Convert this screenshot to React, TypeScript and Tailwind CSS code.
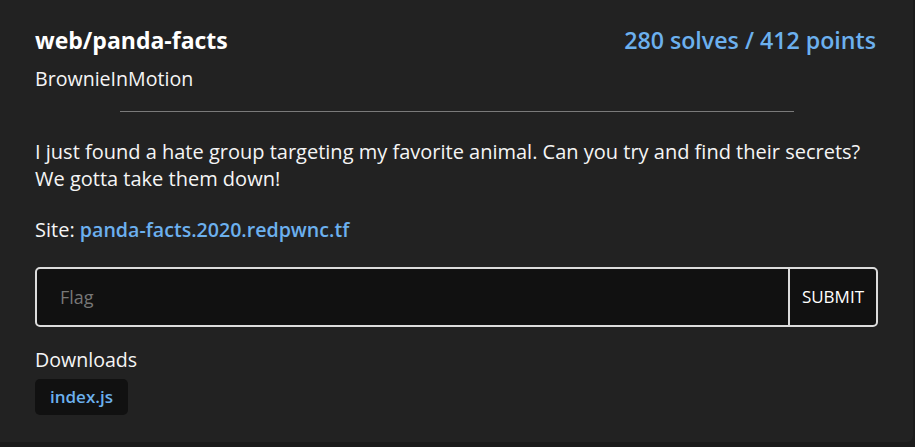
export default function App() {
  return (
    <div className="h-screen w-full bg-[#1b1b1b] font-['Open_Sans',sans-serif] text-[#f5f5f5]">
      <div className="h-[442px] w-[913px] rounded-br-md bg-[#222222] px-[35px] pt-[24px]">
        <div className="flex items-start justify-between">
          <div>
            <h1 className="text-[23px] font-bold leading-[32px] text-white">web/panda-facts</h1>
            <p className="mt-[10px] text-[19.6px] leading-[26px]">BrownieInMotion</p>
          </div>
          <p className="pr-[2px] text-[23.2px] font-semibold leading-[32px] text-[#6cb0ee]">280 solves / 412 points</p>
        </div>
        <hr className="mx-auto mt-[19px] w-[674px] border-t border-[#7a7a7a]" />
        <div className="mt-[26px] text-[20px] leading-[27px]">
          <p>
            I just found a hate group targeting my favorite animal. Can you try and find their secrets?
            <br />
            We gotta take them down!
          </p>
          <p className="mt-[24px]">
            Site: <span className="text-[19.6px] font-semibold text-[#6cb0ee]">panda-facts.2020.redpwnc.tf</span>
          </p>
        </div>
        <form className="mt-[24px] flex h-[60px] overflow-hidden rounded-[5px] border-2 border-[#dcdcdc] bg-[#111111]">
          <input
            className="flex-1 bg-transparent px-[23px] text-[18px] text-white placeholder-[#777] outline-none"
            placeholder="Flag"
          />
          <button type="button" className="border-l-2 border-[#dcdcdc] px-[12px] text-[17px] text-white">
            SUBMIT
          </button>
        </form>
        <p className="mt-[20px] text-[19.6px] leading-[26px]">Downloads</p>
        <div className="mt-[6px] flex">
          <span className="rounded-[5px] bg-[#111111] px-[15px] py-[4px] text-[17px] font-semibold leading-[28px] text-[#6cb0ee]">
            index.js
          </span>
        </div>
      </div>
    </div>
  );
}
